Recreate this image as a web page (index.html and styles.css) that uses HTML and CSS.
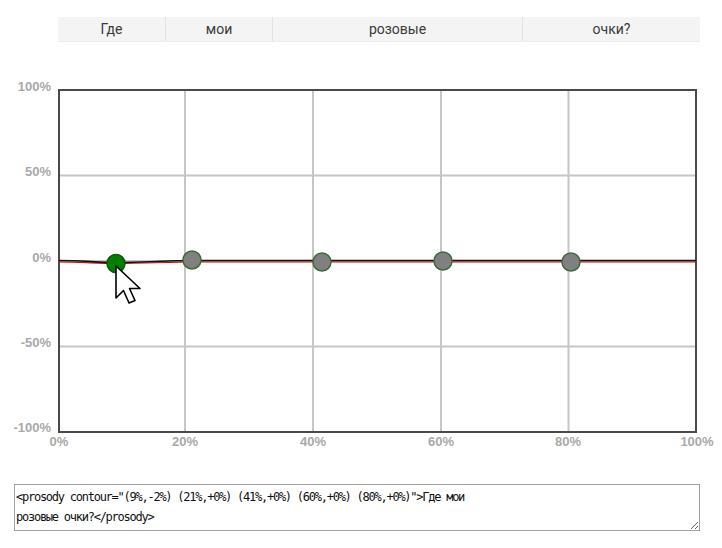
FILE: index.html
```html
<!DOCTYPE html>
<html lang="ru">
<head>
<meta charset="utf-8">
<title>Prosody contour</title>
<link rel="stylesheet" href="styles.css">
</head>
<body>
<div class="words">
  <div class="word">Где</div>
  <div class="word">мои</div>
  <div class="word">розовые</div>
  <div class="word">очки?</div>
</div>
<svg class="chart" width="722" height="410" viewBox="0 50 722 410" xmlns="http://www.w3.org/2000/svg">
  <g class="grid">
    <line x1="58" y1="175.5" x2="696" y2="175.5"/>
    <line x1="58" y1="261" x2="696" y2="261"/>
    <line x1="58" y1="346.5" x2="696" y2="346.5"/>
    <line x1="185" y1="90" x2="185" y2="432"/>
    <line x1="313" y1="90" x2="313" y2="432"/>
    <line x1="441" y1="90" x2="441" y2="432"/>
    <line x1="568.5" y1="90" x2="568.5" y2="432"/>
  </g>
  <rect class="frame" x="59" y="90" width="637" height="342"/>
  <g class="ylab">
    <text x="51" y="91">100%</text>
    <text x="51" y="176">50%</text>
    <text x="51" y="262">0%</text>
    <text x="51" y="347">-50%</text>
    <text x="51" y="432">-100%</text>
  </g>
  <g class="xlab">
    <text x="59" y="446">0%</text>
    <text x="185" y="446">20%</text>
    <text x="313" y="446">40%</text>
    <text x="441" y="446">60%</text>
    <text x="568" y="446">80%</text>
    <text x="697" y="446">100%</text>
  </g>
  <path class="curve-red" d="M59,262 C80,262 100,263.5 116,263.5 C140,263.5 170,262 192,262 L696,262"/>
  <path class="curve" d="M59,260.5 C80,260.5 100,262.5 116,262.5 C140,262.5 170,260.5 192,260.5 L696,260.5"/>
  <circle class="pt active" cx="116" cy="263.5" r="9"/>
  <circle class="pt" cx="192" cy="260" r="9"/>
  <circle class="pt" cx="322" cy="262" r="9"/>
  <circle class="pt" cx="443" cy="261" r="9"/>
  <circle class="pt" cx="571" cy="262" r="9"/>
  <path class="cursor" d="M116,266 L116,298 L123.5,290.5 L129,303 L135,300.5 L129.5,288.5 L140,288.5 Z"/>
</svg>
<textarea class="ssml" spellcheck="false">&lt;prosody contour="(9%,-2%) (21%,+0%) (41%,+0%) (60%,+0%) (80%,+0%)"&gt;Где мои
розовые очки?&lt;/prosody&gt;</textarea>
</body>
</html>
```
FILE: styles.css
```css
html, body {
  margin: 0;
  padding: 0;
  background: #fff;
}
body {
  width: 722px;
  height: 548px;
  overflow: hidden;
}
.words {
  display: grid;
  grid-template-columns: 107px 107px 250px 178px;
  width: 642px;
  height: 25px;
  margin: 17px 0 0 58px;
  background: #f4f4f4;
  border-bottom: 1px solid #ececec;
  box-sizing: border-box;
}
.word {
  display: flex;
  align-items: center;
  justify-content: center;
  font-family: Roboto, "Noto Sans", sans-serif;
  font-size: 14px;
  color: #3a3a3a;
  border-left: 1px solid #e2e2e2;
}
.word:first-child {
  border-left: none;
}
.chart {
  display: block;
  margin-top: 8px;
}
.grid line {
  stroke: #c6c6c6;
  stroke-width: 2;
}
.frame {
  fill: none;
  stroke: #4a4a4a;
  stroke-width: 2;
}
.ylab text, .xlab text {
  font-family: "Liberation Sans", Arial, sans-serif;
  font-size: 13px;
  font-weight: bold;
  fill: #a9a9a9;
}
.ylab text {
  text-anchor: end;
}
.xlab text {
  text-anchor: middle;
}
.curve-red {
  fill: none;
  stroke: #d40000;
  stroke-width: 1.2;
}
.curve {
  fill: none;
  stroke: #111;
  stroke-width: 1.6;
}
.pt {
  fill: #808080;
  stroke: #3d6b3d;
  stroke-width: 1.5;
}
.pt.active {
  fill: #008000;
  stroke: #0b5a0b;
}
.cursor {
  fill: #fff;
  stroke: #000;
  stroke-width: 1.6;
  stroke-linejoin: round;
}
.ssml {
  display: block;
  box-sizing: border-box;
  width: 686px;
  height: 47px;
  margin: 24px 0 0 14px;
  padding: 2px 1px 0;
  border: 1px solid #a0a0a0;
  font-family: "DejaVu Sans Mono", monospace;
  font-size: 12px;
  letter-spacing: -1.25px;
  line-height: 20px;
  color: #111;
  background: #fff;
  resize: both;
  overflow: hidden;
}
```
